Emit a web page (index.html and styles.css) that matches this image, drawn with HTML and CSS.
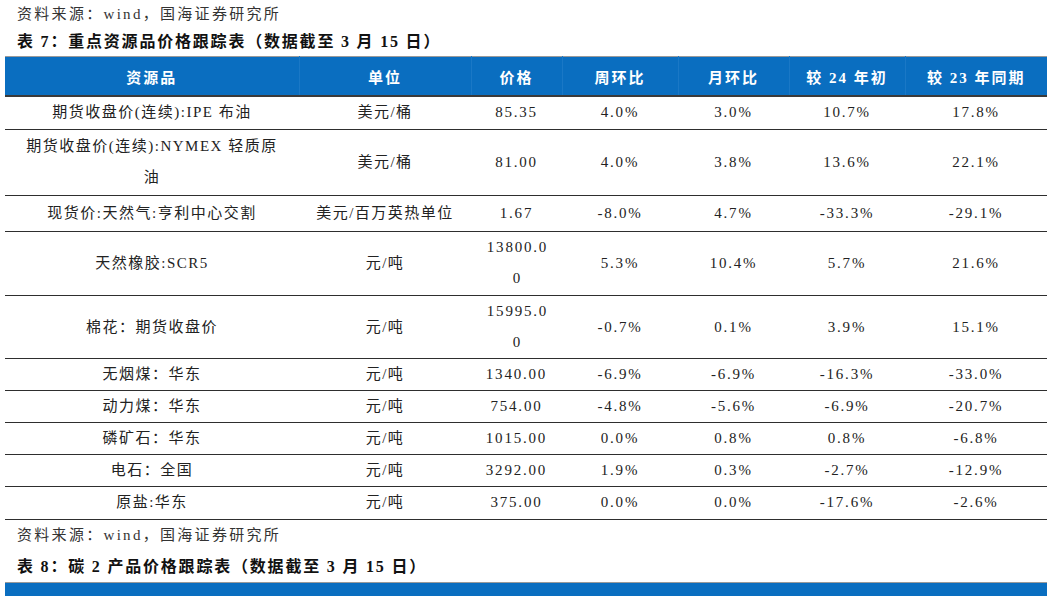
FILE: index.html
```html
<!DOCTYPE html>
<html lang="zh-CN">
<head>
<meta charset="utf-8">
<title>重点资源品价格跟踪表</title>
<link rel="stylesheet" href="styles.css">
</head>
<body>
<div class="page">
  <p class="source">资料来源：wind，国海证券研究所</p>
  <h2 class="title">表 7：重点资源品价格跟踪表（数据截至 3 月 15 日）</h2>
  <table class="tbl">
    <colgroup>
      <col class="c1"><col class="c2"><col class="c3"><col class="c4"><col class="c5"><col class="c6"><col class="c7">
    </colgroup>
    <thead>
      <tr>
        <th>资源品</th><th>单位</th><th>价格</th><th>周环比</th><th>月环比</th><th>较 24 年初</th><th>较 23 年同期</th>
      </tr>
    </thead>
    <tbody>
      <tr class="pad1"><td class="name">期货收盘价(连续):IPE 布油</td><td>美元/桶</td><td class="num">85.35</td><td class="num">4.0%</td><td class="num">3.0%</td><td class="num">10.7%</td><td class="num">17.8%</td></tr>
      <tr class="pad2"><td class="name">期货收盘价(连续):NYMEX 轻质原油</td><td>美元/桶</td><td class="num">81.00</td><td class="num">4.0%</td><td class="num">3.8%</td><td class="num">13.6%</td><td class="num">22.1%</td></tr>
      <tr class="tall"><td class="name">现货价:天然气:亨利中心交割</td><td>美元/百万英热单位</td><td class="num">1.67</td><td class="num">-8.0%</td><td class="num">4.7%</td><td class="num">-33.3%</td><td class="num">-29.1%</td></tr>
      <tr class="pad1"><td class="name">天然橡胶:SCR5</td><td>元/吨</td><td class="num price">13800.00</td><td class="num">5.3%</td><td class="num">10.4%</td><td class="num">5.7%</td><td class="num">21.6%</td></tr>
      <tr><td class="name">棉花：期货收盘价</td><td>元/吨</td><td class="num price">15995.00</td><td class="num">-0.7%</td><td class="num">0.1%</td><td class="num">3.9%</td><td class="num">15.1%</td></tr>
      <tr><td class="name">无烟煤：华东</td><td>元/吨</td><td class="num">1340.00</td><td class="num">-6.9%</td><td class="num">-6.9%</td><td class="num">-16.3%</td><td class="num">-33.0%</td></tr>
      <tr><td class="name">动力煤：华东</td><td>元/吨</td><td class="num">754.00</td><td class="num">-4.8%</td><td class="num">-5.6%</td><td class="num">-6.9%</td><td class="num">-20.7%</td></tr>
      <tr><td class="name">磷矿石：华东</td><td>元/吨</td><td class="num">1015.00</td><td class="num">0.0%</td><td class="num">0.8%</td><td class="num">0.8%</td><td class="num">-6.8%</td></tr>
      <tr><td class="name">电石：全国</td><td>元/吨</td><td class="num">3292.00</td><td class="num">1.9%</td><td class="num">0.3%</td><td class="num">-2.7%</td><td class="num">-12.9%</td></tr>
      <tr class="pad1"><td class="name">原盐:华东</td><td>元/吨</td><td class="num">375.00</td><td class="num">0.0%</td><td class="num">0.0%</td><td class="num">-17.6%</td><td class="num">-2.6%</td></tr>
    </tbody>
  </table>
  <p class="source source2">资料来源：wind，国海证券研究所</p>
  <h2 class="title title2">表 8：碳 2 产品价格跟踪表（数据截至 3 月 15 日）</h2>
  <div class="bar"></div>
</div>
</body>
</html>
```
FILE: styles.css
```css
html, body {
  margin: 0;
  padding: 0;
  background: #ffffff;
}

.page {
  width: 1053px;
  height: 596px;
  overflow: hidden;
  padding: 0 6px 0 5px;
  box-sizing: border-box;
  font-family: "Liberation Serif", "Noto Sans CJK SC", serif;
  color: #1a1a1a;
}

.source {
  margin: 0;
  padding-left: 12px;
  height: 28px;
  line-height: 28px;
  font-size: 15px;
  letter-spacing: 2.3px;
  color: #333333;
}

.title {
  margin: 0;
  padding-left: 12px;
  height: 28px;
  line-height: 28px;
  font-size: 16px;
  font-weight: bold;
  letter-spacing: 1.8px;
  color: #111111;
}

.tbl {
  width: 1042px;
  border-collapse: collapse;
  table-layout: fixed;
  border-top: 1px solid #9a9a9a;
}

.c1 { width: 294px; }
.c2 { width: 172px; }
.c3 { width: 91px; }
.c4 { width: 116px; }
.c5 { width: 111px; }
.c6 { width: 116px; }
.c7 { width: 142px; }

.tbl th {
  background: #0a6ec0;
  color: #ffffff;
  height: 38px;
  padding: 0;
  font-size: 15px;
  font-weight: bold;
  letter-spacing: 2px;
  text-align: center;
  border-left: 1px solid #1a78c6;
  border-bottom: 2px solid #3a3a3a;
}

.tbl th:first-child {
  border-left: none;
}

.tbl td {
  padding: 0 6px;
  line-height: 31px;
  font-size: 15px;
  letter-spacing: 1.5px;
  text-align: center;
  border-bottom: 1px solid #2e2e2e;
  color: #222222;
}

.tbl td.name {
  padding-left: 14px;
  padding-right: 14px;
}

.tbl td.num {
  letter-spacing: 1.8px;
}

.tbl td.price {
  padding-left: 14px;
  padding-right: 12px;
  word-break: break-all;
}

.tbl tr.pad1 td {
  padding-bottom: 1px;
}

.tbl tr.pad2 td {
  padding-top: 1px;
  padding-bottom: 2px;
}

.tbl tr.tall td {
  padding-top: 2px;
  padding-bottom: 2px;
}

.source2 {
  height: 31px;
  line-height: 31px;
}

.title2 {
  height: 31px;
  line-height: 31px;
}

.bar {
  width: 1042px;
  height: 20px;
  background: #0a6ec0;
  border-top: 1px solid #9a9a9a;
}
```
